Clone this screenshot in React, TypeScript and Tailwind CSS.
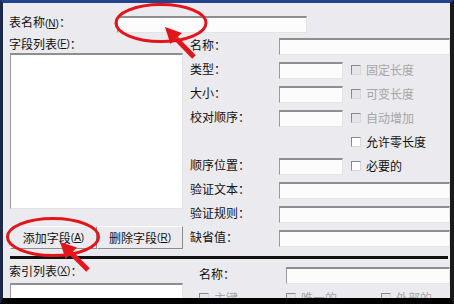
import type { ReactNode } from 'react';

function Key({ k }: { k: string }) {
  return (
    <span className="font-['Liberation_Sans',sans-serif] text-[10px]">
      (<span className="underline">{k}</span>)
    </span>
  );
}

function Field({ className = '' }: { className?: string }) {
  return (
    <div
      className={`h-[17px] bg-[#fcfcfc] border border-t-2 border-t-[#8e8e8e] border-l-[#9a9a9a] border-r-[#e4e4e4] border-b-[#e4e4e4] ${className}`}
    />
  );
}

function Check({ label, disabled }: { label: string; disabled?: boolean }) {
  return (
    <div className="flex items-center">
      <div
        className={`w-[10px] h-[10px] border border-t-[#8a8a8a] border-l-[#8a8a8a] border-r-[#d8d8d8] border-b-[#d8d8d8] ${
          disabled ? 'bg-[#e6e5e9]' : 'bg-white'
        }`}
      />
      <span className={`ml-[5px] ${disabled ? 'text-[#a6a6a6]' : 'text-[#111]'}`}>{label}</span>
    </div>
  );
}

function Row({ label, children }: { label: string; children: ReactNode }) {
  return (
    <div className="flex items-center h-[24px]">
      <div className="w-[89px] -mt-[3px]">{label}</div>
      {children}
    </div>
  );
}

function Button({ children, className = '' }: { children: ReactNode; className?: string }) {
  return (
    <div
      className={`h-[23px] flex items-center justify-center bg-[#ebeaee] border border-t-white border-l-white border-r-[#8c8c8c] border-b-[#8c8c8c] ${className}`}
    >
      {children}
    </div>
  );
}

export default function App() {
  return (
    <div className="relative w-[454px] h-[304px] font-['Noto_Sans_CJK_SC','Liberation_Sans',sans-serif] text-[12px] leading-none text-[#111]">
      <div className="w-full h-full overflow-hidden bg-[#ebeaee] border-t-[3px] border-t-[#24438f] border-l-[3px] border-l-[#1c2a48] border-r-[4px] border-r-[#1a1a1a] border-b-[6px] border-b-black">
        {/* table name */}
        <div className="flex items-center h-[31px] pt-[11px] pl-[6px]">
          <div className="w-[108px] -mt-[3px]">
            表名称<Key k="N" />：
          </div>
          <Field className="w-[190px]" />
        </div>

        {/* fields */}
        <div className="flex">
          <div className="w-[180px] pl-[6px]">
            <div className="h-[19px] flex items-center">
              字段列表<Key k="F" />：
            </div>
            <div className="ml-[1px] w-[173px] h-[156px] bg-white border border-t-2 border-t-[#8e8e8e] border-l-[#9a9a9a] border-r-[#e4e4e4] border-b-[#e4e4e4]" />
            <div className="ml-[1px] mt-[17px] flex">
              <Button className="w-[87px]">
                添加字段<Key k="A" />
              </Button>
              <Button className="w-[86px]">
                删除字段<Key k="R" />
              </Button>
            </div>
          </div>
          <div className="flex-1 pl-[7px]">
            <Row label="名称：">
              <Field className="flex-1" />
            </Row>
            <Row label="类型：">
              <Field className="w-[64px] mr-[8px]" />
              <Check label="固定长度" disabled />
            </Row>
            <Row label="大小：">
              <Field className="w-[64px] mr-[8px]" />
              <Check label="可变长度" disabled />
            </Row>
            <Row label="校对顺序：">
              <Field className="w-[64px] mr-[8px]" />
              <Check label="自动增加" disabled />
            </Row>
            <Row label="">
              <div className="w-[72px]" />
              <Check label="允许零长度" />
            </Row>
            <Row label="顺序位置：">
              <Field className="w-[64px] mr-[8px]" />
              <Check label="必要的" />
            </Row>
            <Row label="验证文本：">
              <Field className="flex-1" />
            </Row>
            <Row label="验证规则：">
              <Field className="flex-1" />
            </Row>
            <Row label="缺省值：">
              <Field className="flex-1" />
            </Row>
          </div>
        </div>

        <div className="mt-[6px] ml-[7px] mr-[2px] h-[3px] bg-[#111]" />

        {/* indexes */}
        <div className="flex">
          <div className="w-[180px] pl-[6px]">
            <div className="h-[24px] flex items-center">
              索引列表<Key k="X" />：
            </div>
            <div className="ml-[1px] w-[173px] h-[30px] bg-white border border-t-2 border-t-[#8e8e8e] border-l-[#9a9a9a] border-r-[#e4e4e4]" />
          </div>
          <div className="flex-1 pl-[16px]">
            <div className="flex items-center pt-[8px]">
              <div className="w-[87px] -mt-[3px]">名称：</div>
              <Field className="flex-1" />
            </div>
            <div className="flex mt-[8px]">
              <div className="w-[87px]">
                <Check label="主键" disabled />
              </div>
              <div className="w-[95px]">
                <Check label="唯一的" disabled />
              </div>
              <Check label="外部的" disabled />
            </div>
          </div>
        </div>
      </div>

      {/* red annotations */}
      <svg className="absolute top-0 left-0 pointer-events-none" width="454" height="304" viewBox="0 0 454 304">
        <ellipse cx="161" cy="23" rx="45" ry="18.5" fill="none" stroke="#e3151b" strokeWidth="3" />
        <line x1="194" y1="57" x2="176" y2="38.5" stroke="#e3151b" strokeWidth="5" />
        <polygon points="165,27 181.9,32.9 170.4,44.1" fill="#e3151b" />
        <ellipse cx="53" cy="237" rx="45.5" ry="18.5" fill="none" stroke="#e3151b" strokeWidth="3" />
        <line x1="88" y1="270" x2="71" y2="253" stroke="#e3151b" strokeWidth="5" />
        <polygon points="60,242 77,247.6 65.6,259" fill="#e3151b" />
      </svg>
    </div>
  );
}
